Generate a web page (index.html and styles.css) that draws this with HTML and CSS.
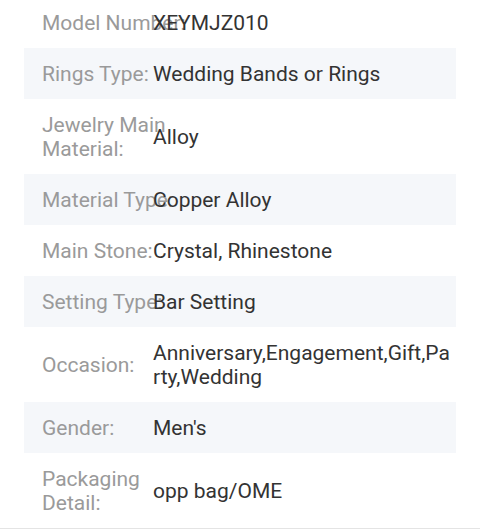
FILE: index.html
```html
<!DOCTYPE html>
<html>
<head>
<meta charset="utf-8">
<link rel="stylesheet" href="styles.css">
</head>
<body>
<div class="specs">
  <div class="row"><div class="label">Model Number:</div><div class="value">XEYMJZ010</div></div>
  <div class="row alt"><div class="label">Rings Type:</div><div class="value">Wedding Bands or Rings</div></div>
  <div class="row"><div class="label">Jewelry Main<br>Material:</div><div class="value">Alloy</div></div>
  <div class="row alt"><div class="label">Material Type:</div><div class="value">Copper Alloy</div></div>
  <div class="row"><div class="label">Main Stone:</div><div class="value">Crystal, Rhinestone</div></div>
  <div class="row alt"><div class="label">Setting Type:</div><div class="value">Bar Setting</div></div>
  <div class="row"><div class="label">Occasion:</div><div class="value">Anniversary,Engagement,Gift,Party,Wedding</div></div>
  <div class="row alt"><div class="label">Gender:</div><div class="value">Men's</div></div>
  <div class="row"><div class="label">Packaging<br>Detail:</div><div class="value">opp bag/OME</div></div>
</div>
</body>
</html>
```
FILE: styles.css
```css
html, body {
  margin: 0;
  padding: 0;
  background: #ffffff;
  overflow: hidden;
}
body {
  font-family: Roboto, "Liberation Sans", sans-serif;
  font-size: 21px;
  line-height: 24px;
  height: 529px;
  border-bottom: 1px solid #e4e4e4;
  box-sizing: border-box;
}
.specs {
  margin: -3px 24px 0 24px;
  display: flex;
  flex-direction: column;
}
.row {
  display: flex;
  align-items: center;
  padding: 13.5px 6px 13.5px 18px;
}
.row.alt {
  background: #f5f7fa;
}
.label {
  flex: 0 0 111px;
  width: 111px;
  color: #9a9a9a;
  white-space: nowrap;
}
.value {
  flex: 1;
  min-width: 0;
  color: #333333;
  word-break: break-all;
}
```
